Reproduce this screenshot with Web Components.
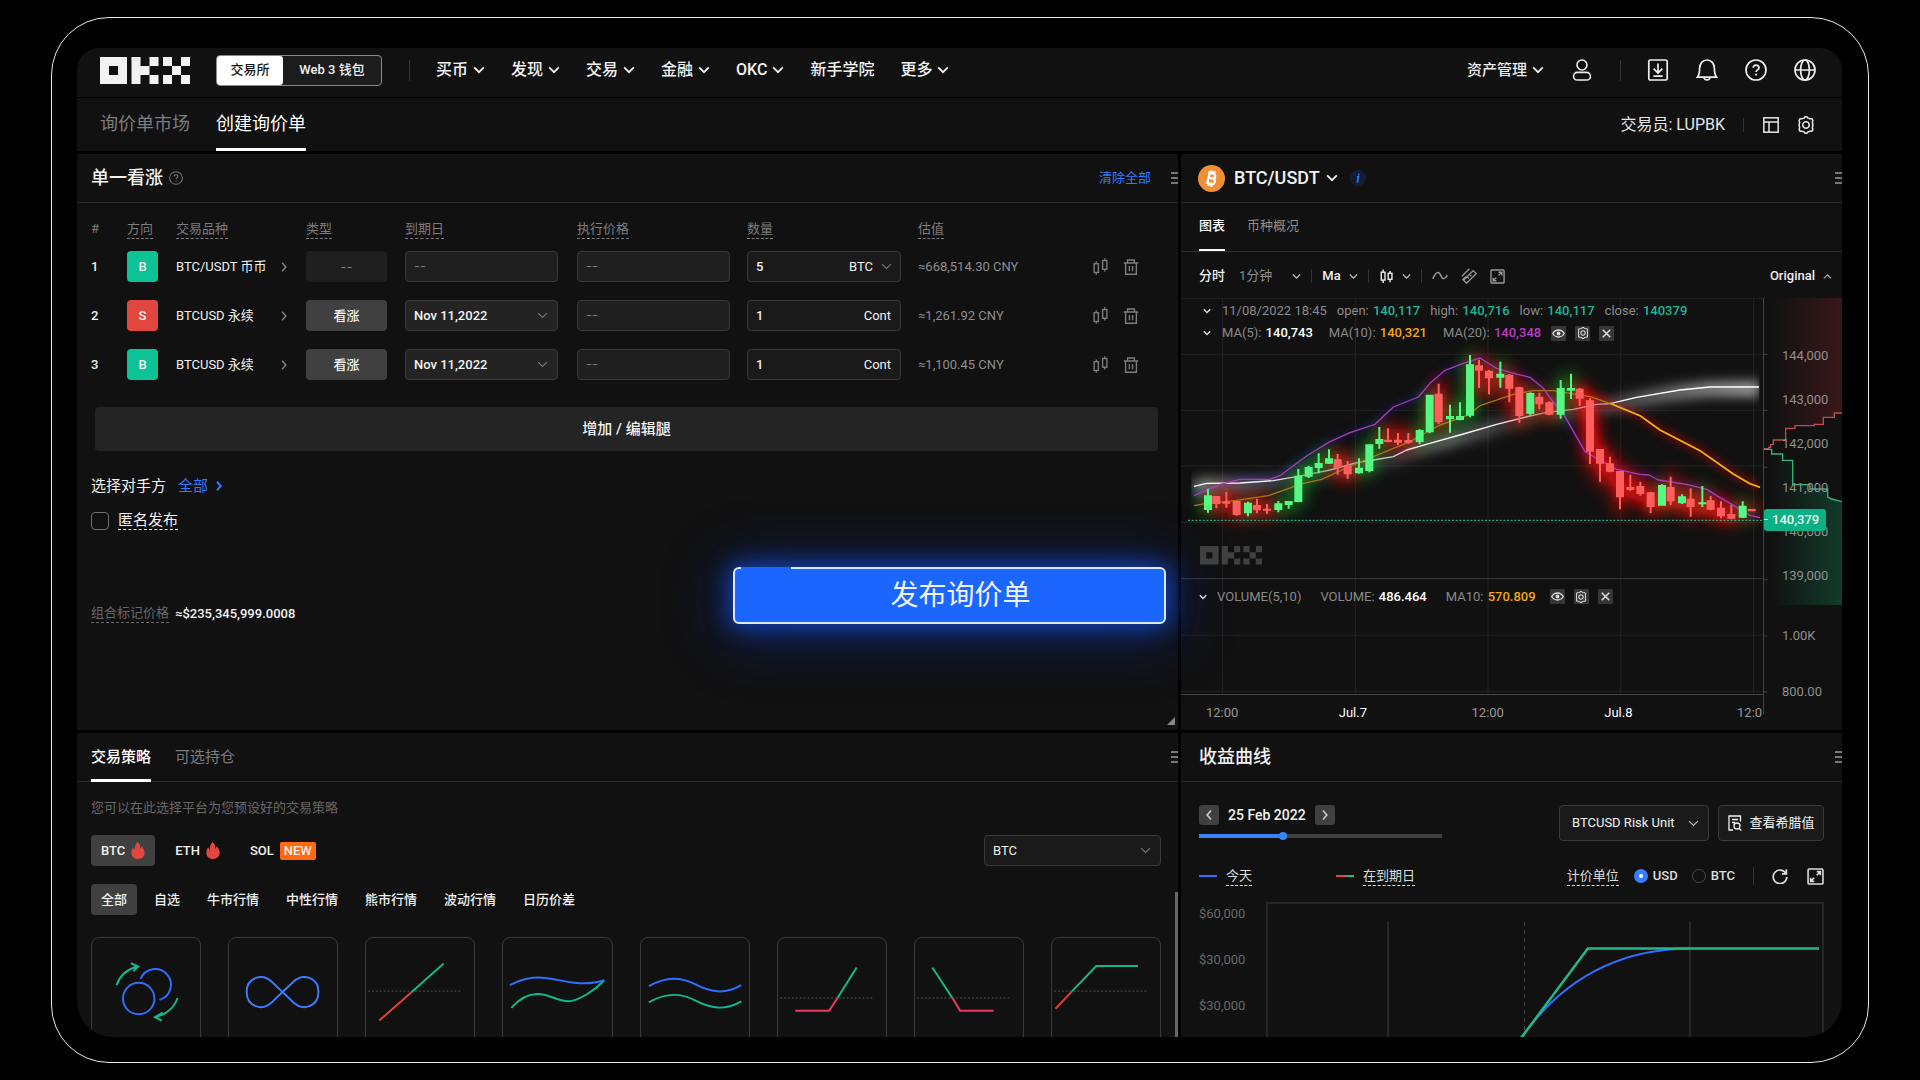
<!DOCTYPE html>
<html lang="zh-CN">
<head>
<meta charset="utf-8">
<title>创建询价单</title>
<style>
html,body{margin:0;background:#000;height:100%}
body{font-family:Roboto,"Noto Sans CJK SC",sans-serif;font-size:13px;line-height:20px;color:#f2f2f2;
--panel:#111;--line:#2d2d2d;--muted:#7d7d7d;--dim:#686868;--blue:#2f7bff;--green:#0cc296;--red:#e0473e}
</style>
</head>
<body>
<okx-app></okx-app>
<script>
const BASE = `
*,:host{box-sizing:border-box}
:host{display:block}
button,input,select{font:inherit;color:inherit;margin:0;padding:0;border:0;background:none}
button{display:inline-flex;align-items:center;justify-content:center;white-space:nowrap}
a{color:inherit;text-decoration:none;white-space:nowrap}
svg{display:block}
.hint{border-bottom:1px dashed currentColor;white-space:nowrap;line-height:18px;display:inline-block}
.row{display:flex;align-items:center}
.sep{width:1px;background:#333}
.m{font-weight:500}
`;
function define(name, html, css, setup) {
  const tpl = document.createElement('template');
  tpl.innerHTML = `<style>${BASE}${css}</style>${html}`;
  customElements.define(name, class extends HTMLElement {
    constructor() { super(); this.attachShadow({ mode: 'open' }); }
    connectedCallback() {
      if (this.shadowRoot.childNodes.length) return;
      this.shadowRoot.append(tpl.content.cloneNode(true));
      if (setup) setup.call(this, this.shadowRoot);
    }
  });
}

/* ---------- icons ---------- */
const gearPath = 'M8.6 2.6 L10 1 h2 L13.4 2.6 L16 3.4 L18.2 3.4 L19.4 5.4 L18.8 7.8 L19.4 11 L18.8 14.2 L19.4 16.6 L18.2 18.6 L16 18.6 L13.4 19.4 L12 21 h-2 L8.6 19.4 L6 18.6 L3.8 18.6 L2.6 16.6 L3.2 14.2 L2.6 11 L3.2 7.8 L2.6 5.4 L3.8 3.4 L6 3.4 Z';
const ICONS = {
  down: ['0 0 12 12', '<path d="M1.2 3.4 6 8.2l4.8-4.8"/>'],
  up: ['0 0 12 12', '<path d="M1.2 8.6 6 3.8l4.8 4.8"/>'],
  right: ['0 0 12 12', '<path d="M4 1.6 7.8 6 4 10.4"/>'],
  left: ['0 0 12 12', '<path d="M8 1.6 4.2 6 8 10.4"/>'],
  user: ['0 0 22 22', '<circle cx="11" cy="6" r="5"/><rect x="2.6" y="13.4" width="16.8" height="7.6" rx="3.6"/>'],
  download: ['0 0 22 22', '<rect x="1.8" y="1" width="18.4" height="20" rx="1.6"/><path d="M11 4.6v9M6.6 9.6 11 14l4.4-4.4M6.4 17.2h9.2"/>'],
  bell: ['0 0 22 22', '<path d="M1.4 18.2C3.6 15.4 3.6 12.6 3.6 9.4 3.6 4.4 6.8 1 11 1s7.4 3.4 7.4 8.4c0 3.2 0 6 2.2 8.8Z"/><path d="M7.8 18.8c1.6 2.8 4.8 2.8 6.4 0"/>'],
  help: ['0 0 22 22', '<circle cx="11" cy="11" r="10"/><path d="M8.2 8.8c0-3.6 5.8-3.6 5.8 0 0 2-2.9 2.2-2.9 4.2M11.1 14.8v1.8"/>'],
  globe: ['0 0 22 22', '<circle cx="11" cy="11" r="10"/><ellipse cx="11" cy="11" rx="4.4" ry="10"/><path d="M1 11h20"/>'],
  layout: ['0 0 16 16', '<rect x=".8" y=".8" width="14.4" height="14.4"/><path d="M1 5h14M6 5v10"/>'],
  gear: ['0 0 22 22', `<path d="${gearPath}"/><circle cx="11" cy="11" r="4"/>`],
  bars: ['0 0 14 16', '<rect x="1" y="5.4" width="4" height="8.2"/><path d="M3 3.2v2.2M3 13.6v2.2"/><rect x="9" y="2.4" width="4" height="8.2"/><path d="M11 .2v2.2M11 10.6v2.2"/>'],
  trash: ['0 0 16 16', '<path d="M.8 4h14.4M4.6 3.8V1h6.8v2.8M2.6 4v11.2h10.8V4M6.4 7v5.2M9.6 7v5.2"/>'],
  candle: ['0 0 14 16', '<rect x="1.4" y="3.4" width="4" height="8.4"/><path d="M3.4.6v2.8M3.4 11.8v3.2"/><rect x="8.8" y="4.6" width="4" height="6.4"/><path d="M10.8 2v2.6M10.8 11v3"/>'],
  wave: ['0 0 16 12', '<path d="M.8 8.8C5-.6 7.6 2.4 9 6s3.800 3.600 6.400-.6"/>'],
  ruler: ['0 0 16 16', '<path d="M.8 8.400 8.400 .8M1.400 12 5 8.400M5.600 15.200 2.600 12.200 12.200 2.600 15.200 5.600ZM6.200 8.800 8 10.600M8.600 6.400 10.400 8.200"/>'],
  expand: ['0 0 16 16', '<rect x="1" y="1" width="14" height="14" rx="1"/><path d="M9.200 6.800 12.400 3.600M9.200 3.400h3.400v3.400M6.800 9.200 3.600 12.400M3.400 9.200v3.400h3.400"/>'],
  eye: ['0 0 16 16', '<path d="M1.800 8C5 3 11 3 14.200 8 11 13 5 13 1.800 8Z"/><circle cx="8" cy="8" r="1.400" fill="currentColor"/>'],
  close: ['0 0 16 16', '<path d="M4 4l8 8M12 4l-8 8"/>'],
  refresh: ['0 0 16 16', '<path d="M14 5.600A6.800 6.800 0 1 0 14.800 9M14.400 1.200v4.600H10"/>'],
  doc: ['0 0 14 16', '<path d="M5 15H1V1h11.500v5.500M4 4.500h6M4 7.500h3"/><circle cx="9" cy="11" r="3"/><path d="M11 13.200 13.400 15.600"/>'],
};
customElements.define('okx-icon', class extends HTMLElement {
  connectedCallback() {
    if (this.shadowRoot) return;
    const [vb, body] = ICONS[this.getAttribute('name')];
    const size = this.getAttribute('size') || 12;
    const sw = this.getAttribute('stroke') || 1.4;
    this.attachShadow({ mode: 'open' }).innerHTML =
      `<style>:host{display:inline-block;flex:none;width:${size}px;height:${size}px}svg{display:block;width:100%;height:100%}</style>
       <svg viewBox="${vb}" fill="none" stroke="currentColor" stroke-width="${sw}" aria-hidden="true">${body}</svg>`;
  }
});
define('okx-logo', `<svg viewBox="0 0 90 27" fill="currentColor" role="img" aria-label="OKX">
<path fill-rule="evenodd" d="M0 0h27v27H0ZM9 9v9h9V9Z"/>
<path d="M31.500 0h9v9h9v9h-9v9h-9ZM49.500 0h9v9h-9ZM49.500 18h9v9h-9ZM63 0h9v9h-9ZM81 0h9v9h-9ZM72 9h9v9h-9ZM63 18h9v9h-9ZM81 18h9v9h-9Z"/></svg>`,
`:host{width:90px}svg{width:100%;height:auto}`);

define('okx-flame', `<svg viewBox="0 0 14 18" fill="#e0473e" aria-hidden="true"><path d="M6.500 0C9 2 9.600 4.400 9.300 7.200 10.300 6.600 10.800 5.400 10.800 4.200 13 6.600 14 9 14 11.400 14 15.400 11 18 7 18S0 15.400 0 11.600C0 8.800 1 7 1.900 5.400 2.200 6.800 2.700 7.600 3.600 8.200 3.500 5 4.200 2.200 6.500 0Z"/></svg>`,
`:host{width:14px;flex:none}svg{width:14px;height:17px}`);

/* ---------- drop-down ---------- */
define('okx-select', `<select></select><okx-icon name="down" size="11" stroke="1.300"></okx-icon>`,
`:host{display:grid;grid-template-columns:1fr auto;align-items:center;height:31px;border:1px solid #3a3a3a;border-radius:4px;background:#1a1a1a;min-width:0}
select{appearance:none;grid-area:1/1/2/3;width:100%;height:100%;padding:0 24px 0 8px;outline:0}
okx-icon{grid-area:1/2;margin-right:9px;color:var(--arrow,#777);pointer-events:none}
:host([filled]){background:#232323}
:host([bare]){border:0;background:none}
:host([bare]) select{text-align:right;padding-right:27px}
:host([bare]) okx-icon{margin-right:8px}
:host([tall]){height:36px}:host([tall]) select{padding-left:12px}
`, function (r) {
  const s = r.querySelector('select');
  s.setAttribute('aria-label', this.getAttribute('label'));
  s.innerHTML = `<option>${this.getAttribute('value')}</option>`;
});

/* ---------- panel ---------- */
define('okx-panel', `<header><div class="head"><slot name="head"></slot></div><button aria-label="面板菜单"><i></i><i></i><i></i></button></header><slot></slot>`,
`:host{background:var(--panel);display:flex;flex-direction:column;min-width:0;min-height:0}
header{display:flex;align-items:center;height:49px;border-bottom:1px solid var(--line);flex:none}
.head{flex:1;min-width:0;height:100%;display:flex;align-items:center;padding-left:14px}
button{flex-direction:column;gap:3px;width:7px;margin-left:20px}
i{display:block;width:7px;height:2px;background:#777}`);

/* ---------- top bar ---------- */
define('okx-topbar', `
<okx-logo></okx-logo>
<div class="toggle"><button class="on">交易所</button><button>Web 3 钱包</button></div>
<span class="sep"></span>
<nav>${['买币', '发现', '交易', '金融', 'OKC', '新手学院', '更多'].map(t =>
  `<a href="#">${t}${t === '新手学院' ? '' : '<okx-icon name="down" stroke="1.800"></okx-icon>'}</a>`).join('')}</nav>
<div class="end">
<a href="#">资产管理<okx-icon name="down" stroke="1.800"></okx-icon></a>
<button aria-label="用户"><okx-icon name="user" size="22" stroke="1.600"></okx-icon></button>
<span class="sep"></span>
<div class="tools">
<button aria-label="下载"><okx-icon name="download" size="22" stroke="1.700"></okx-icon></button>
<button aria-label="通知"><okx-icon name="bell" size="22" stroke="1.700"></okx-icon></button>
<button aria-label="帮助"><okx-icon name="help" size="22" stroke="1.700"></okx-icon></button>
<button aria-label="语言"><okx-icon name="globe" size="22" stroke="1.700"></okx-icon></button>
</div></div>`,
`:host{display:flex;align-items:center;height:50px;padding:0 26px 5px 23px;background:var(--panel);border-bottom:1px solid #000;font-size:15px;font-weight:500}
.toggle{display:flex;margin-left:26px;width:166px;height:31px;border:1px solid #8a8a8a;border-radius:4px;font-size:13px;background:#1c1c1c}
.toggle button{flex:1}
.toggle .on{flex:0 0 66px;background:#fff;color:#111;border-radius:3px}
.sep{height:21px;margin:0 26px 0 27px}
nav{display:flex;gap:26px;font-size:16px}
a{display:flex;align-items:center;gap:5px}
.end{margin-left:auto;display:flex;align-items:center;color:#eee}
.end>button{margin-left:27px}
.tools{display:flex;gap:27px}`);

define('okx-subnav', `
<nav><a href="#">询价单市场</a><a href="#" class="on" aria-current="page">创建询价单</a></nav>
<div class="row end"><span>交易员: LUPBK</span><span class="sep"></span>
<button aria-label="布局"><okx-icon name="layout" size="16" stroke="1.500"></okx-icon></button>
<button aria-label="设置"><okx-icon name="gear" size="18" stroke="1.900"></okx-icon></button></div>`,
`:host{display:flex;height:53px;padding:0 27px 0 23px;background:var(--panel);font-size:18px}
nav{display:flex;gap:26px;color:var(--muted)}
a{display:flex;align-items:center;padding-top:2px;border-bottom:3px solid transparent}
.on{color:#fff;border-color:#fff}
.end{margin-left:auto;font-size:16px;color:#e6e6e6}
.sep{height:14px;margin:0 19px 0 18px}
button+button{margin-left:18px}`);

/* ---------- RFQ builder ---------- */
const LEGS = [
  { side: 'B', name: 'BTC/USDT 币币', type: '', date: '', qty: '5', unit: 'BTC', est: '≈668,514.30 CNY' },
  { side: 'S', name: 'BTCUSD 永续', type: '看涨', date: 'Nov 11,2022', qty: '1', unit: 'Cont', est: '≈1,261.92 CNY' },
  { side: 'B', name: 'BTCUSD 永续', type: '看涨', date: 'Nov 11,2022', qty: '1', unit: 'Cont', est: '≈1,100.45 CNY' },
];
define('okx-legs', `<table><colgroup><col style="width:36px"><col style="width:49px"><col style="width:130px"><col style="width:99px"><col style="width:172px"><col style="width:170px"><col style="width:171px"><col><col style="width:86px"></colgroup>
<thead><tr><th>#</th>${['方向', '交易品种', '类型', '到期日', '执行价格', '数量', '估值'].map(t => `<th><span class="hint">${t}</span></th>`).join('')}<th></th></tr></thead>
<tbody>${LEGS.map((l, i) => `<tr><td class="m">${i + 1}</td>
<td><button class="side ${l.side}">${l.side}</button></td>
<td><button class="inst">${l.name}<okx-icon name="right" stroke="1.400"></okx-icon></button></td>
<td><button class="type ${l.type ? '' : 'off'}">${l.type || '--'}</button></td>
<td>${l.date ? `<okx-select class="w m" filled label="到期日" value="${l.date}"></okx-select>` : '<input class="w" aria-label="到期日" placeholder="--">'}</td>
<td><input class="w" aria-label="执行价格" placeholder="--"></td>
<td><div class="qty"><input aria-label="数量" value="${l.qty}">${l.unit === 'BTC' ? '<okx-select bare label="单位" value="BTC"></okx-select>' : `<span>${l.unit}</span>`}</div></td>
<td class="est">${l.est}</td>
<td><div class="act"><button aria-label="查看行情"><okx-icon name="bars" size="17" stroke="1.300"></okx-icon></button><button aria-label="删除"><okx-icon name="trash" size="16" stroke="1.400"></okx-icon></button></div></td></tr>`).join('')}</tbody></table>`,
`table{width:100%;table-layout:fixed;border-collapse:collapse}
th,td{padding:0;text-align:left;font-weight:400}
th{height:39px;vertical-align:bottom;padding-bottom:3px;color:var(--muted)}
td{height:49px;vertical-align:middle}
.side{width:31px;height:31px;border-radius:4px;font-weight:500;background:var(--green)}
.side.S{background:var(--red)}
.inst{width:114px;justify-content:space-between}
.inst okx-icon{color:#888}
.type{width:81px;height:31px;border-radius:4px;background:#404040;font-weight:500}
.type.off{background:#1f1f1f;color:var(--muted);font-weight:400;font-family:Inter,sans-serif}
.w{width:153px}
input.w{height:31px;border:1px solid #3a3a3a;border-radius:4px;background:#1f1f1f;padding:0 8px;display:block}
input::placeholder{color:var(--muted);opacity:1;font-family:Inter,sans-serif}
.qty{display:flex;align-items:center;width:154px;height:31px;border:1px solid #3a3a3a;border-radius:4px;background:#1a1a1a}
.qty input{flex:1;min-width:0;padding-left:8px;font-weight:500}
.qty span{margin-right:9px}
.qty okx-select{width:70px;height:29px}
.est{color:#8e8e8e}
.act{display:flex;gap:14px;color:var(--muted)}`);

define('okx-builder', `
<okx-panel>
<div slot="head" class="title"><b>单一看涨</b><okx-icon name="help" size="14" stroke="1.600"></okx-icon><button class="clear">清除全部</button></div>
<div class="body">
<okx-legs></okx-legs>
<button class="add">增加 / 编辑腿</button>
<div class="party">选择对手方<a href="#">全部<okx-icon name="right" stroke="2"></okx-icon></a></div>
<label class="anon"><input type="checkbox"><span class="hint">匿名发布</span></label>
<div class="foot"><p><span class="hint">组合标记价格</span><span class="m">≈$235,345,999.0008</span></p><button class="publish">发布询价单</button></div>
<span class="grip"></span>
</div></okx-panel>`,
`:host{display:grid;position:relative;z-index:1;min-width:0}
.title{display:flex;align-items:center;width:100%;font-size:18px}
.title b{font-weight:500}.title okx-icon{margin-left:6px;color:#777}
.clear{margin-left:auto;font-size:13px;color:var(--blue)}
.body{padding:0 0 105px 14px;position:relative}
.add{display:flex;width:calc(100% - 24px);height:44px;margin:18px 20px 0 4px;border-radius:4px;background:#242424;font-size:15px;font-weight:500}
.party{display:flex;align-items:center;margin-top:25px;font-size:15px}
.party a{display:flex;align-items:center;gap:5px;margin-left:12px;color:var(--blue)}
.anon{display:flex;align-items:center;width:max-content;margin-top:15px;font-size:15px}
.anon input{appearance:none;width:18px;height:18px;margin-right:9px;border:1px solid #707070;border-radius:4px}
.foot{display:flex;align-items:flex-end;justify-content:space-between;margin:37px 12px 0 0}
p{margin:0;display:flex;gap:6px;align-items:flex-start}
p .hint{color:var(--dim)}
.publish{position:relative;flex:0 1 433px;height:57px;padding-left:22px;font-size:28px;background:#1b66ff;border:2px solid #dce8ff;border-radius:6px;box-shadow:0 0 22px 4px rgba(22,90,255,.6),0 6px 60px 10px rgba(10,60,220,.35)}
.publish::before{content:"";position:absolute;left:6px;top:-2px;width:50px;height:2px;background:#1b66ff}
.grip{position:absolute;right:3px;bottom:4px;border:solid transparent;border-width:4px;border-right-color:#888;border-bottom-color:#888}`);

/* ---------- market chart: [x, bodyTop, bodyBottom, wickTop, wickBottom, rising] ---------- */
const CANDLES = [
[84,766,810,746,818,1],[109,768,792,768,805,0],[139,785,791,756,803,0],[170,783,825,783,827,0],[204,788,820,785,829,1],[231,795,811,776,820,0],[261,806,812,792,822,0],[295,790,810,783,817,1],[326,783,795,783,806,1],[355,707,786,687,787,1],[386,681,710,678,714,1],[416,669,684,640,700,1],[447,655,671,628,672,1],[473,658,683,642,704,0],[503,677,703,663,716,0],[537,683,700,655,701,1],[568,613,693,613,697,1],[598,597,612,561,626,1],[624,599,606,565,607,0],[654,599,608,579,615,0],[685,600,608,579,612,0],[719,570,606,568,612,1],[749,464,577,464,580,1],[776,461,547,431,552,0],[810,528,538,494,578,1],[840,528,540,487,541,1],[870,373,527,345,532,1],[897,376,392,359,444,0],[927,392,415,390,463,0],[961,401,413,365,443,1],[988,404,446,402,487,0],[1018,442,528,440,548,0],[1051,459,521,457,526,1],[1078,470,493,458,508,0],[1108,487,524,484,526,0],[1142,444,524,420,536,1],[1173,444,452,401,477,1],[1199,446,476,444,497,0],[1230,481,635,475,672,0],[1260,627,671,627,725,0],[1290,670,695,650,697,0],[1320,693,772,693,808,0],[1351,741,750,704,752,0],[1381,738,762,725,767,0],[1412,757,801,755,819,0],[1446,735,797,733,797,1],[1472,741,784,710,795,0],[1506,769,790,763,792,1],[1532,776,801,745,830,0],[1567,787,793,738,801,1],[1592,781,809,768,811,0],[1623,803,829,784,835,0],[1654,822,836,795,838,0],[1688,797,833,784,834,1],[1715,807,814,807,814,0]];
const bars = up => CANDLES.filter(c => c[5] === up).map(([x, a, b, t, u]) => `M${x - 12} ${a}h24V${b}h-24ZM${x - 3} ${t}h6V${u}h-6Z`).join('');
const WHITE = 'M42 739 80 730 180 729 280 722 350 710 450 690 530 668 580 660 640 650 680 630 760 607 850 582 950 553 1050 528 1100 517 1180 508 1250 493 1290 491 1370 472 1500 450 1590 441 1737 441';
const ORANGE = 'M42 797 80 790 170 781 265 767 370 730 425 718 500 683 580 650 690 605 780 555 860 527 900 497 1000 463 1060 452 1120 452 1230 470 1290 490 1380 527 1440 570 1560 632 1660 702 1710 731 1740 742';
const PURPLE = 'M42 767 120 733 180 718 270 718 300 707 380 648 450 605 510 578 585 553 640 501 715 471 750 430 795 391 850 370 900 354 950 385 990 397 1050 412 1090 445 1115 480 1155 530 1215 635 1250 655 1310 688 1380 703 1407 705 1435 720 1520 733 1580 748 1620 773 1660 796 1710 826 1740 833';
const VX = [128, 527, 924, 1321, 1721];
define('okx-chart', `
<svg class="plot" viewBox="3 174 1746 1191" preserveAspectRatio="none" aria-hidden="true">
<defs>
<filter id="wide" filterUnits="userSpaceOnUse" x="0" y="170" width="1750" height="900"><feGaussianBlur stdDeviation="24"/></filter>
<filter id="mid" filterUnits="userSpaceOnUse" x="0" y="170" width="1750" height="900"><feGaussianBlur stdDeviation="17"/></filter>
<filter id="soft" filterUnits="userSpaceOnUse" x="0" y="170" width="1750" height="900"><feGaussianBlur stdDeviation="12"/></filter>
<linearGradient id="wg" gradientUnits="userSpaceOnUse" x1="42" y1="0" x2="1740" y2="0"><stop offset="0" stop-color="#fff" stop-opacity=".5"/><stop offset=".2" stop-color="#fff" stop-opacity=".08"/><stop offset=".34" stop-color="#fff" stop-opacity=".15"/><stop offset=".45" stop-color="#fff" stop-opacity=".35"/><stop offset=".62" stop-color="#fff" stop-opacity=".06"/><stop offset=".75" stop-color="#fff" stop-opacity=".25"/><stop offset="1" stop-color="#fff" stop-opacity=".65"/></linearGradient>
<linearGradient id="wl" gradientUnits="userSpaceOnUse" x1="42" y1="0" x2="1740" y2="0"><stop offset="0" stop-color="#fff"/><stop offset=".14" stop-color="#eee"/><stop offset=".2" stop-color="#a39c94"/><stop offset=".33" stop-color="#c4c0ba"/><stop offset=".42" stop-color="#fff"/><stop offset=".54" stop-color="#eee"/><stop offset=".61" stop-color="#c08a80"/><stop offset=".72" stop-color="#c99"/><stop offset=".76" stop-color="#fff"/></linearGradient>
<clipPath id="edge"><path d="M34 174H1738V1014H34Z"/></clipPath>
</defs>
<path d="M3 175H1749M3 343H1749M3 511H1749M3 678H1749M3 847H1749M3 1186H1749M3 1354H1749${VX.map(x => `M${x} 174V1364`).join('')}" stroke="#242424" stroke-width="3" fill="none"/>
<path d="M3 1016H1749" stroke="#3a3a3a" stroke-width="3"/>
<g fill="none" clip-path="url(#edge)">
<path d="${WHITE}" transform="translate(0 6)" stroke="url(#wg)" stroke-width="44" filter="url(#mid)"/>
<path d="${PURPLE}" stroke="#2a1fd0" stroke-width="14" opacity=".35" filter="url(#soft)"/>
<path d="M1200 462 1290 490 1380 527 1440 570 1560 632 1660 702 1740 742" stroke="#f00" stroke-width="20" opacity=".4" filter="url(#soft)"/>
</g>
<path d="${bars(1)}" fill="#17c02c" stroke="#17c02c" stroke-width="16" filter="url(#wide)" opacity=".6"/>
<path d="${bars(0)}" fill="#ff1010" stroke="#ff1010" stroke-width="26" filter="url(#wide)" opacity=".65"/>
<path d="M1199 450 1230 560 1260 660 1320 740 1412 785 1532 795 1654 830" fill="none" stroke="#ff0d0d" stroke-width="30" filter="url(#mid)" opacity=".6"/>
<g fill="none" stroke-width="4" stroke-linejoin="round">
<path d="${WHITE}" stroke="url(#wl)"/>
<path d="${ORANGE}" stroke="#a9770f"/><path d="M1290 490 1380 527 1440 570 1560 632 1660 702 1710 731 1740 742" stroke="#f0ae12" stroke-width="5"/>
<path d="${PURPLE}" stroke="#a83fb4"/>
</g>
<path d="${bars(1)}" fill="#55f883"/><path d="${bars(0)}" fill="#ff5f5c"/>
<path d="M24 841H1749" stroke="#2cc79e" stroke-width="3" stroke-dasharray="6 5"/>
<path d="M3 1363.500H1749" stroke="#444" stroke-width="3"/>
</svg>
<div class="over">
<div class="leg"><okx-icon name="down" size="8" stroke="2.200"></okx-icon><span class="k">11/08/2022 18:45</span>
${[['open:', '140,117'], ['high:', '140,716'], ['low:', '140,117'], ['close:', '140379']].map(([a, b]) => `<span class="k s">${a} <b class="t">${b}</b></span>`).join('')}</div>
<div class="leg ma"><okx-icon name="down" size="8" stroke="2.200"></okx-icon><span class="k">MA(5): <b>140,743</b></span><span class="k">MA(10): <b class="o">140,321</b></span><span class="k">MA(20): <b class="p">140,348</b></span>
<span class="tools"><button aria-label="显示"><okx-icon name="eye" size="15"></okx-icon></button><button aria-label="设置"><okx-icon name="gear" size="12" stroke="1.900"></okx-icon></button><button aria-label="移除"><okx-icon name="close" size="15" stroke="1.600"></okx-icon></button></span></div>
<okx-logo></okx-logo>
<div class="leg vol"><okx-icon name="down" size="8" stroke="2.200"></okx-icon><span class="k">VOLUME(5,10)</span><span class="k">VOLUME: <b>486.464</b></span><span class="k">MA10: <b class="o">570.809</b></span>
<span class="tools"><button aria-label="显示成交量"><okx-icon name="eye" size="15"></okx-icon></button><button aria-label="设置成交量"><okx-icon name="gear" size="12" stroke="1.900"></okx-icon></button><button aria-label="移除成交量"><okx-icon name="close" size="15" stroke="1.600"></okx-icon></button></span></div>
</div>
<div class="axis">
<svg viewBox="789 174 237 1296" preserveAspectRatio="none" aria-hidden="true">
<defs><linearGradient id="r" x1="0" x2="1"><stop offset=".1" stop-color="#5a1c20" stop-opacity="0"/><stop offset="1" stop-color="#5a1c20" stop-opacity=".55"/></linearGradient>
<linearGradient id="g" x1="0" x2="1"><stop offset=".1" stop-color="#12583c" stop-opacity="0"/><stop offset="1" stop-color="#12583c" stop-opacity=".6"/></linearGradient></defs>
<path d="M790 174H1026V519H1003V532H970V553H943V557H885V565H857V600H820V614H812V622H790Z" fill="url(#r)"/>
<path d="M790 628H815V642H848V661H878V734H930V747H983V771L1026 785V1095H790Z" fill="url(#g)"/>
<path d="M790 626H806V622H812V614H820V600H857V565H885V557H943V553H970V532H1003V519H1026" fill="none" stroke="#c04a50" stroke-width="4"/>
<path d="M790 628H815V642H848V661H878V734H930V747H983V771L995 777 1026 785" fill="none" stroke="#2fb47c" stroke-width="4"/>
<path d="M790.500 174V1424M790 343h12M790 511h12M790 682h12M790 1019h12M790 1188h12M790 1356h12" stroke="#444" stroke-width="3"/></svg>
<div class="prices">${['144,000', '143,000', '142,000', '141,000', '140,000', '139,000', '1.00K', '800.00'].map(t => `<span>${t}</span>`).join('')}</div>
<strong class="m">140,379</strong>
</div>
<div class="times"><span>12:00</span><b>Jul.7</b><span>12:00</span><b>Jul.8</b><span>12:0</span></div>`,
`:host{display:grid;grid-template:minmax(397px,1fr) 35px / minmax(0,1fr) 79px;min-height:432px;flex:1}
.plot{grid-area:1/1;width:100%;height:100%}
.over{grid-area:1/1;min-width:0;display:flex;flex-direction:column;align-items:flex-start;padding:3px 0 0 22px;z-index:1}
.leg{display:flex;align-items:center;white-space:nowrap;height:20px;color:#8a8a8a}
.leg>okx-icon{margin-right:11px;color:#ddd}
.k.s{margin-left:10px}
b{font-weight:500;color:#fff}.k b{margin-left:1px}
.t{color:#1fb697}.o{color:#eea70f}.p{color:#b93dc6}
.ma{margin-top:2px}.ma .k+.k{margin-left:16px}.vol .k+.k{margin-left:19px}
.tools{display:flex;gap:9px;margin-left:10px}
.tools button{width:15px;height:15px;background:#363636;color:#ddd;border-radius:1px}
okx-logo{width:62px;color:#404040;margin:203px 0 0 -3px}
.vol{margin:22px 0 0 -4px}.vol>okx-icon{margin-right:10px}.vol .tools{margin-left:14px}
.axis{grid-area:1/2/3/3;display:grid;position:relative}
.axis svg{grid-area:1/1;width:100%;height:100%}
.prices{grid-area:1/1;display:flex;flex-direction:column;gap:24px;padding:48px 0 0 19px;color:#8f8f8f}
.prices span:nth-child(7){margin-top:16px}.prices span:nth-child(8){margin-top:12px}
strong{position:absolute;left:1px;top:211px;width:62px;height:22px;line-height:22px;padding-left:8px;border-radius:3px;background:#0bb085}
strong::before{content:"";position:absolute;left:0;top:10px;width:4px;height:1px;background:#fff}
.times{grid-area:2/1;display:grid;grid-template-columns:repeat(4,133fr) 26fr;padding:8px 0 0 25px;color:#999;overflow:hidden}
.times b{font-weight:400}`);

define('okx-market', `
<okx-panel>
<div slot="head" class="pair"><svg width="27" height="27" viewBox="0 0 27 27" aria-hidden="true"><circle cx="13.500" cy="13.500" r="13.500" fill="#f08f35"/><g fill="none" stroke="#fff" stroke-width="2.200" transform="rotate(12 13.500 13.500)"><path d="M10.500 8v11M9 8.200h5.200c3.200 0 3.200 5 0 5h-3.700M14.200 13.200c4.400 0 4.400 5.600 0 5.600H9M12 5.500v2.500M15 5.500v2.500M12 19v2.600M15 19v2.600" /></g></svg>
<b>BTC/USDT</b><okx-icon name="down" size="12" stroke="1.800"></okx-icon><svg class="i" width="16" height="16" viewBox="0 0 16 16" aria-hidden="true"><circle cx="8" cy="8" r="8" fill="#131c33"/><path d="M7 6.800h1.600L7.400 11.800H8.600M8.800 3.800v1.600" stroke="#2f7bff" stroke-width="1.500" fill="none"/></svg></div>
<nav><a href="#" class="on">图表</a><a href="#">币种概况</a></nav>
<div class="bar"><button class="m">分时</button><button class="mut min">1分钟<okx-icon name="down" size="9" stroke="1.800"></okx-icon></button><span class="sep"></span>
<button class="m">Ma<okx-icon name="down" size="9" stroke="1.800"></okx-icon></button><span class="sep"></span>
<button aria-label="图表类型"><okx-icon name="candle" size="15" stroke="1.500"></okx-icon><okx-icon name="down" size="9" stroke="1.800"></okx-icon></button><span class="sep"></span>
<span class="set"><button aria-label="指标"><okx-icon name="wave" size="16" stroke="1.500"></okx-icon></button><button aria-label="画线"><okx-icon name="ruler" size="16" stroke="1.300"></okx-icon></button><button aria-label="全屏"><okx-icon name="expand" size="15" stroke="1.500"></okx-icon></button></span>
<button class="orig m">Original<okx-icon name="up" size="9" stroke="1.600"></okx-icon></button></div>
<okx-chart></okx-chart>
</okx-panel>`,
`:host{display:grid;min-width:0}
.pair{display:flex;align-items:center;padding-left:3px;font-size:18px}
.pair b{font-weight:500;margin:0 6px 0 9px}.i{margin-left:12px}
nav{display:flex;gap:22px;height:49px;padding-left:18px;border-bottom:1px solid var(--line);color:#8e8e8e}
nav a{display:flex;align-items:center;border-bottom:2px solid transparent}
nav .on{color:#fff;border-color:#fff;font-weight:500}
.bar{display:flex;align-items:center;height:46px;padding:2px 10px 0 18px;color:#eee}
.bar button{gap:8px}.bar okx-icon[name=down]{color:#bbb}
.mut{color:#8e8e8e}.bar .min{gap:20px;margin-left:14px}
.sep{height:14px;margin:0 10px}
.set{display:flex;gap:13px;color:#999}
.orig{margin-left:auto}.orig okx-icon{color:#aaa}`);

/* ---------- strategies ---------- */
const D = y => `<path d="M2 ${y}H97" stroke="#555" stroke-width="1" stroke-dasharray="2 2"/>`;
const B = '#2f6fff', G = '#12b98c', R = '#e0413a', P = '#f0385c';
const CARDS = [
  ['兑换', `<circle cx="47.500" cy="61.500" r="16" stroke="${B}"/><path d="M49.500 41.500A16 16 0 1 1 68.500 63" stroke="${B}"/><path d="M25 48C28 39 35 32 46 29M39.500 25.500 47 29 42 34M87 61C84 70 77 77 65 80.500M72 76 64 80.500 71 84" stroke="${G}"/>`],
  ['永续', `<path d="M54.500 55 65 45C75 35 91 40 91 55S75 75 65 65L44 45C34 35 18 40 18 55S34 75 44 65Z" stroke="#3f7bff"/>`],
  ['现货', `${D(54)}<path d="M13.500 84 46.500 55" stroke="${R}"/><path d="M46.500 55 79 26" stroke="${G}"/>`],
  ['价差', `<path d="M8.500 71C20 58 32 55 43 58S62 66 70 64 92 55 103 43" stroke="${G}"/><path d="M7 48C24 39 37 39 52 42S85 49 103 43" stroke="${B}"/>`],
  ['期现价差', `<path d="M8 49C25 39 40 39 55 47S85 58 102 48" stroke="${B}"/><path d="M8 65.500C25 55.500 40 55.500 55 63.500S85 74.500 102 64.500" stroke="${G}"/>`],
  ['单一看涨', `${D(61)}<path d="M17.600 74H52L60.500 61" stroke="${P}"/><path d="M60.500 61 80 30" stroke="${G}"/>`],
  ['单一看跌', `${D(61)}<path d="M38 61 46 74H80" stroke="${P}"/><path d="M17.600 30 38 61" stroke="${G}"/>`],
  ['备兑看涨', `${D(54)}<path d="M3.500 72 20.500 54" stroke="${R}"/><path d="M20.500 54 45 28.500H87.500" stroke="${G}"/>`],
];
define('okx-strategies', `
<okx-panel>
<nav slot="head"><a href="#" class="on">交易策略</a><a href="#">可选持仓</a></nav>
<div class="body">
<p>您可以在此选择平台为您预设好的交易策略</p>
<div class="chips coins"><button class="on">BTC<okx-flame></okx-flame></button><button>ETH<okx-flame></okx-flame></button><button>SOL<em>NEW</em></button><okx-select label="币种" value="BTC"></okx-select></div>
<div class="chips kinds">${['全部', '自选', '牛市行情', '中性行情', '熊市行情', '波动行情', '日历价差'].map((t, i) => `<button${i ? '' : ' class="on"'}>${t}</button>`).join('')}</div>
<div class="cards">${CARDS.map(([n, s]) => `<button aria-label="${n}"><svg viewBox="0 0 110 110" fill="none" stroke-width="2">${s}</svg></button>`).join('')}</div>
<span class="thumb"></span>
</div></okx-panel>`,
`:host{display:grid;min-width:0;min-height:0}
nav{display:flex;gap:24px;height:100%;font-size:15px;color:var(--muted);margin-bottom:-2px}
nav a{display:flex;align-items:center;padding-top:1px;border-bottom:3px solid transparent}
nav .on{color:#fff;font-weight:500;border-color:#fff}
.body{position:relative;flex:1;min-height:0;overflow:hidden;padding:16px 17px 0 14px}
p{margin:0;color:var(--dim)}
.chips{display:flex;align-items:center;font-weight:500}
.chips button{height:31px;padding:0 10px;border-radius:4px;gap:6px}
.chips .on{background:#404040}
.coins{margin-top:17px;gap:10px}
.kinds{margin-top:18px;gap:7px}
em{font-style:normal;height:18px;line-height:18px;padding:0 4px;border-radius:2px;background:#ff6a10}
okx-select{width:177px;margin-left:auto;font-weight:400}
.cards{display:grid;grid-template-columns:repeat(8,minmax(0,1fr));gap:27px;margin-top:22px}
.cards button{display:flex;align-items:flex-start;height:150px;border:1px solid #3a3a3a;border-radius:8px}
.cards svg{width:100%;height:auto}
.thumb{position:absolute;right:0;top:110px;bottom:0;width:3px;background:#666}`);

/* ---------- payoff ---------- */
define('okx-payoff', `
<okx-panel>
<b slot="head" class="ttl">收益曲线</b>
<div class="body">
<div class="top"><div class="date">
<div class="row"><button aria-label="前一天"><okx-icon name="left" stroke="1.600"></okx-icon></button><span class="m">25 Feb 2022</span><button aria-label="后一天"><okx-icon name="right" stroke="1.600"></okx-icon></button></div>
<input type="range" aria-label="日期" min="0" max="100" value="34"></div>
<okx-select tall label="风险单元" value="BTCUSD Risk Unit"></okx-select>
<button class="greek"><okx-icon name="doc" size="16" stroke="1.300"></okx-icon>查看希腊值</button></div>
<div class="legend"><i class="bl"></i><span class="hint">今天</span><i class="rg"></i><span class="hint">在到期日</span>
<div class="row unit" role="radiogroup" aria-label="计价单位"><span class="hint">计价单位</span>
<label><input type="radio" name="u" checked>USD</label><label><input type="radio" name="u">BTC</label><span class="sep"></span>
<button aria-label="刷新"><okx-icon name="refresh" size="16" stroke="1.700"></okx-icon></button><button aria-label="放大"><okx-icon name="expand" size="17" stroke="1.500"></okx-icon></button></div></div>
<div class="chart"><div class="y"><span>$60,000</span><span>$30,000</span><span>$30,000</span></div>
<div class="plot"><svg viewBox="0 0 556 180" preserveAspectRatio="none" fill="none" aria-hidden="true">
<path d="M120.500 18V180M423.500 18V180" stroke="#3f3f3f"/><path d="M257.500 18V180" stroke="#4a4a4a" stroke-dasharray="4 4"/>
<path d="M254 134C299 70 359 45 423 44.500" stroke="#2f6fff" stroke-width="2"/><path d="M231 180 254 134 321 44.500H553" stroke="#20b98b" stroke-width="2.500"/></svg></div></div>
</div></okx-panel>`,
`:host{display:grid;min-width:0;min-height:0}
.ttl{font-size:18px;font-weight:500;padding-left:4px}
.body{padding:23px 18px 0;overflow:hidden;flex:1;min-height:0}
.top{display:flex;align-items:flex-start;gap:9px}
.date{width:243px;margin-right:auto}
.date .row{gap:9px;font-size:14px}
.date button{width:20px;height:20px;border-radius:3px;background:#404040;color:#ccc}
input[type=range]{appearance:none;display:block;width:100%;height:8px;margin-top:7px;background:linear-gradient(#3a83ff,#3a83ff) 0 50%/34% 4px no-repeat,linear-gradient(#404040,#404040) 0 50%/100% 4px no-repeat}
input[type=range]::-webkit-slider-thumb{appearance:none;width:8px;height:8px;border-radius:50%;background:#3a83ff}
okx-select{width:150px;--arrow:#bbb}
.greek{width:106px;height:36px;gap:6px;border:1px solid #3a3a3a;border-radius:4px;background:#1a1a1a}
.legend{display:flex;align-items:center;margin-top:25px;height:20px;color:#ddd}
i{width:18px;height:2px;background:#2f6fff;margin-right:9px}
.rg{margin-left:84px;background:linear-gradient(90deg,#e0473e 50%,#20b98b 50%)}
.unit{margin-left:auto}
label{display:flex;align-items:center;gap:5px;margin-left:15px;font-weight:500}
label+label{margin-left:14px}
input[type=radio]{appearance:none;width:14px;height:14px;border:1px solid #4a4a4a;border-radius:50%}
input[type=radio]:checked{border:5px solid #3a7cff;background:#fff}
.sep{height:18px;margin:0 18px}
button+button{margin-left:19px}
.date button+button,.top>.greek{margin-left:0}
.chart{display:flex;margin-top:16px;color:var(--dim)}
.y{width:67px;display:flex;flex-direction:column;gap:26px;padding-top:2px}
.plot{flex:1;height:182px;border:2px solid #262626;border-bottom:0}
.plot svg{width:100%;height:180px}`);

/* ---------- app ---------- */
define('okx-app', `<div class="frame"><main><okx-topbar></okx-topbar><okx-subnav></okx-subnav>
<div class="grid"><okx-builder></okx-builder><okx-market></okx-market><okx-strategies></okx-strategies><okx-payoff></okx-payoff></div></main></div>`,
`:host{height:100vh;padding:17px 51px;display:grid;background:#000}
.frame{min-height:0;min-width:0;display:grid;padding:30px 26px 25px 25px;border:1px solid #e8e8e8;border-radius:58px}
main{min-height:0;min-width:0;display:flex;flex-direction:column;overflow:hidden;border-radius:22px 22px 36px 36px}
.grid{flex:1;min-height:0;margin-top:3px;display:grid;grid-template:auto minmax(0,1fr) / 1101fr 661fr;gap:3px}
okx-topbar,okx-subnav{flex:none}`);
</script>
</body>
</html>
